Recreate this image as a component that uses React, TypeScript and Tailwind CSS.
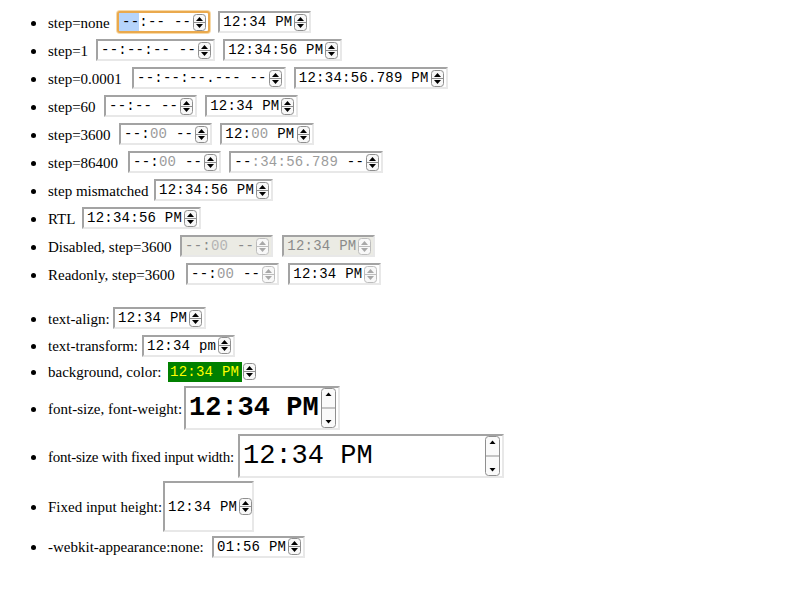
import React from 'react';

type Seg = { t: string; g?: boolean; sel?: boolean };

const S = (t: string, g = false, sel = false): Seg => ({ t, g, sel });

function Spin({ big = false, dim = false }: { big?: boolean; dim?: boolean }) {
  const stroke = dim ? '#bdbdbd' : '#8f8f8f';
  const tri = dim ? '#a8a8a8' : '#000000';
  if (big) {
    return (
      <svg width="15" height="40" viewBox="0 0 15 40" className="shrink-0 block">
        <rect x="0.5" y="0.5" width="14" height="39" rx="3" fill="#fafafa" stroke={stroke} />
        <line x1="0.5" y1="20" x2="14.5" y2="20" stroke={stroke} />
        <path d="M4.5 8L7.5 4.5L10.5 8Z" fill={tri} />
        <path d="M4.5 32L7.5 35.5L10.5 32Z" fill={tri} />
      </svg>
    );
  }
  return (
    <svg width="13" height="17" viewBox="0 0 13 17" className="shrink-0 block">
      <rect x="0.5" y="0.5" width="12" height="16" rx="3" fill="#f8f8f8" stroke={stroke} />
      <line x1="0.5" y1="8.5" x2="12.5" y2="8.5" stroke={stroke} />
      <path d="M3 7L6.5 3L10 7Z" fill={tri} />
      <path d="M3 10L6.5 14L10 10Z" fill={tri} />
    </svg>
  );
}

function Text({ segs, gray, dimGray }: { segs: Seg[]; gray: string; dimGray?: string }) {
  return (
    <span className="whitespace-pre flex items-stretch self-stretch tracking-[0.25px]">
      {segs.map((s, i) =>
        s.sel ? (
          <span key={i} className="bg-[#b6d4fb] -ml-[3px] pl-[3px] flex items-center">
            {s.t}
          </span>
        ) : (
          <span
            key={i}
            className="flex items-center"
            style={{ color: s.g ? dimGray || '#9c9c9c' : gray }}
          >
            {s.t}
          </span>
        )
      )}
    </span>
  );
}

const boxBase =
  'inline-flex items-center border-2 border-t-[#a3a3a3] border-l-[#a3a3a3] border-b-[#e8e8e8] border-r-[#e8e8e8] pl-[3px] pr-[2px] shrink-0';

function Field({
  segs,
  disabled = false,
  readonly = false,
  focus = false,
}: {
  segs: Seg[];
  disabled?: boolean;
  readonly?: boolean;
  focus?: boolean;
}) {
  if (focus) {
    return (
      <span className="inline-flex items-center h-[22px] pl-[3px] pr-[2px] shrink-0 bg-white border-2 border-[#eaa94d] rounded-[3px] shadow-[0_0_0_1px_#f7d9a8] font-['Liberation_Mono',monospace] text-[14px] leading-none">
        <Text segs={segs} gray="#000" />
        <span className="ml-[2px]">
          <Spin />
        </span>
      </span>
    );
  }
  return (
    <span
      className={
        boxBase +
        ' h-[22px] font-[\'Liberation_Mono\',monospace] text-[14px] leading-none ' +
        (disabled ? 'bg-[#ebebe4]' : 'bg-white')
      }
    >
      <Text
        segs={segs}
        gray={disabled ? '#8a8a8a' : '#000'}
        dimGray={disabled ? '#b4b4b4' : '#9c9c9c'}
      />
      <span className="ml-[2px]">
        <Spin dim={disabled || readonly} />
      </span>
    </span>
  );
}

function Bullet() {
  return <span className="ml-[23px] mr-[12px] w-[5px] h-[5px] rounded-full bg-black shrink-0 translate-y-[1px]" />;
}

function Row({
  label,
  lw,
  children,
  h = 'h-[28px]',
  gap = 'gap-[8px]',
  lc = '',
}: {
  label: string;
  lw: string;
  children: React.ReactNode;
  h?: string;
  gap?: string;
  lc?: string;
}) {
  return (
    <li className={'flex items-center ' + h}>
      <Bullet />
      <span className={'whitespace-pre translate-y-[1px] shrink-0 ' + lw + ' ' + lc}>{label}</span>
      <span className={'flex items-center ' + gap}>{children}</span>
    </li>
  );
}

const t1234 = [S('12:34 PM')];

export default function App() {
  return (
    <div className="w-[800px] h-[600px] bg-white text-black font-['Liberation_Serif',serif] text-[15px] px-[8px] pt-[8px]">
      <ul className="flex flex-col">
        <Row label="step=none" lw="w-[69px]" gap="gap-[8px]">
          <Field focus segs={[S('--', false, true), S(':-- --')]} />
          <Field segs={t1234} />
        </Row>
        <Row label="step=1" lw="w-[48px]">
          <Field segs={[S('--:--:-- --')]} />
          <Field segs={[S('12:34:56 PM')]} />
        </Row>
        <Row label="step=0.0001" lw="w-[84px]">
          <Field segs={[S('--:--:--.--- --')]} />
          <Field segs={[S('12:34:56.789 PM')]} />
        </Row>
        <Row label="step=60" lw="w-[56px]">
          <Field segs={[S('--:-- --')]} />
          <Field segs={t1234} />
        </Row>
        <Row label="step=3600" lw="w-[71px]">
          <Field segs={[S('--:'), S('00', true), S(' --')]} />
          <Field segs={[S('12:'), S('00', true), S(' PM')]} />
        </Row>
        <Row label="step=86400" lw="w-[80px]">
          <Field segs={[S('--:'), S('00', true), S(' --')]} />
          <Field segs={[S('--'), S(':34:56.789', true), S(' --')]} />
        </Row>
        <Row label="step mismatched" lw="w-[106px]">
          <Field segs={[S('12:34:56 PM')]} />
        </Row>
        <Row label="RTL" lw="w-[34px]">
          <Field segs={[S('12:34:56 PM')]} />
        </Row>
        <Row label="Disabled, step=3600" lw="w-[132px]" gap="gap-[9px]">
          <Field disabled segs={[S('--:'), S('00', true), S(' --')]} />
          <Field disabled segs={t1234} />
        </Row>
        <Row label="Readonly, step=3600" lw="w-[138px]" gap="gap-[9px]">
          <Field readonly segs={[S('--:'), S('00', true), S(' --')]} />
          <Field readonly segs={t1234} />
        </Row>
      </ul>
      <ul className="flex flex-col mt-[16px]">
        <Row label="text-align:" lw="w-[65px]">
          <Field segs={t1234} />
        </Row>
        <Row label="text-transform:" lw="w-[94px]" h="h-[27px]">
          <Field segs={[S('12:34 pm')]} />
        </Row>
        <Row label="background, color:" lw="w-[120px]" h="h-[25px]">
          <span className="inline-flex items-center font-['Liberation_Mono',monospace] text-[14px] leading-none">
            <span className="h-[20px] flex items-center bg-[#008000] text-[#ffff00] pl-[2px] pr-[3px] whitespace-pre tracking-[0.25px]">
              12:34 PM
            </span>
            <span className="ml-[1px]">
              <Spin />
            </span>
          </span>
        </Row>
        <Row label="font-size, font-weight:" lw="w-[136px]" h="h-[48px]">
          <span
            className={
              boxBase +
              " h-[44px] bg-white font-['Liberation_Mono',monospace] text-[27px] font-bold leading-none"
            }
          >
            <span className="whitespace-pre">12:34 PM</span>
            <span className="ml-[2px]">
              <Spin big />
            </span>
          </span>
        </Row>
        <Row
          label="font-size with fixed input width:"
          lw="w-[190px]"
          lc="tracking-[-0.25px]"
          h="h-[48px]"
        >
          <span
            className={
              boxBase +
              " h-[44px] w-[266px] bg-white font-['Liberation_Mono',monospace] text-[27px] leading-none"
            }
          >
            <span className="whitespace-pre">12:34 PM</span>
            <span className="ml-auto">
              <Spin big />
            </span>
          </span>
        </Row>
        <Row label="Fixed input height:" lw="w-[115px]" h="h-[53px]">
          <span
            className={
              boxBase +
              " h-[51px] w-[91px] bg-white font-['Liberation_Mono',monospace] text-[14px] leading-none"
            }
          >
            <span className="whitespace-pre tracking-[0.25px]">12:34 PM</span>
            <span className="ml-[2px]">
              <Spin />
            </span>
          </span>
        </Row>
        <Row label="-webkit-appearance:none:" lw="w-[164px]" h="h-[27px]">
          <span
            className={
              boxBase +
              " h-[22px] bg-white font-['Liberation_Mono',monospace] text-[14px] leading-none"
            }
          >
            <span className="whitespace-pre tracking-[0.25px]">01:56 PM</span>
            <span className="ml-[2px]">
              <Spin />
            </span>
          </span>
        </Row>
      </ul>
    </div>
  );
}
